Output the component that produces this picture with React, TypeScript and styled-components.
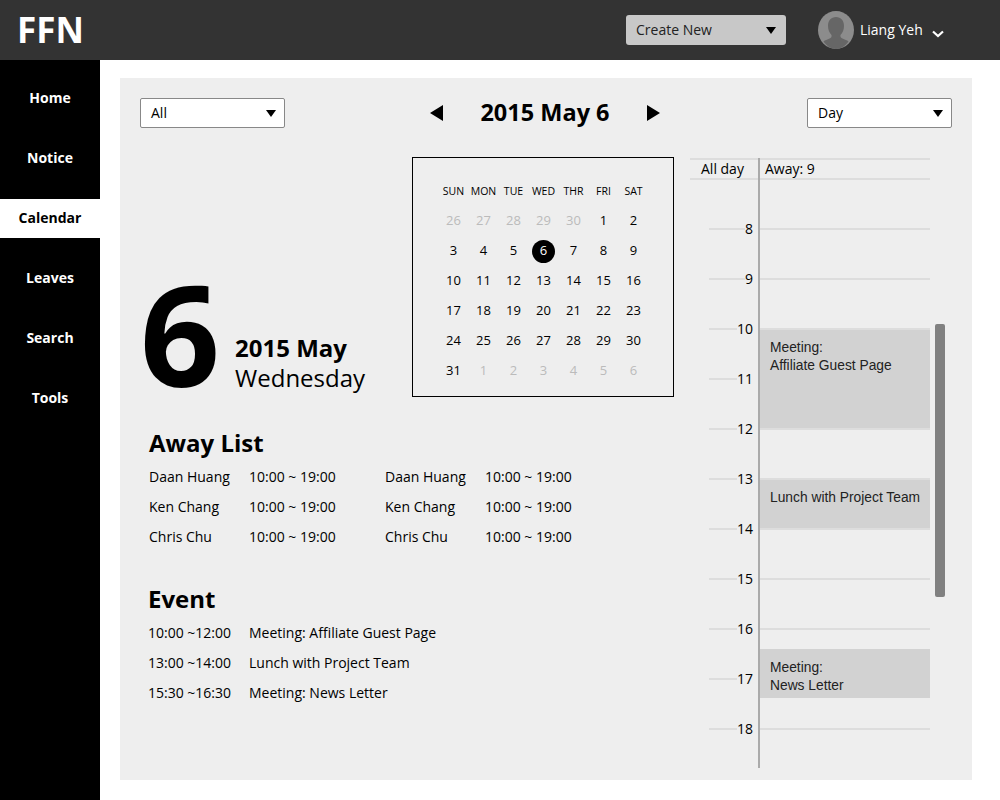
import React from "react";
import styled, { createGlobalStyle } from "styled-components";

const GlobalStyle = createGlobalStyle`
  html, body {
    margin: 0;
    padding: 0;
    background: #fff;
    font-family: "Open Sans", sans-serif;
    color: #000;
  }
`;

const Page = styled.div`
  width: 1000px;
  height: 800px;
  display: flex;
  flex-direction: column;
  overflow: hidden;
`;

const Header = styled.header`
  height: 60px;
  flex: none;
  background: #333;
  display: flex;
  align-items: center;
  padding-left: 17px;
`;

const Logo = styled.div`
  font-size: 35px;
  font-weight: 700;
  line-height: 60px;
  color: #fff;
`;

const CreateNew = styled.div`
  margin-left: auto;
  width: 160px;
  height: 30px;
  box-sizing: border-box;
  padding: 0 10px 2px;
  background: #c8c8c8;
  border-radius: 3px;
  display: flex;
  align-items: center;
  justify-content: space-between;
  font-size: 14px;
  color: #222;
`;

const Caret = styled.span`
  width: 0;
  height: 0;
  margin-top: 2px;
  border-left: 5px solid transparent;
  border-right: 5px solid transparent;
  border-top: 7px solid #000;
`;

const User = styled.div`
  display: flex;
  align-items: center;
  margin-left: 32px;
  width: 182px;
  color: #fff;
  font-size: 14px;
`;

const UserName = styled.span`
  margin: 0 0 2px 6px;
`;

const Chevron = styled.svg`
  margin: 8px 0 0 9px;
`;

const Body = styled.div`
  flex: 1;
  display: flex;
`;

const Sidebar = styled.nav`
  width: 100px;
  flex: none;
  background: #000;
  display: flex;
  flex-direction: column;
  gap: 20px;
  padding-top: 18px;
  box-sizing: border-box;
`;

const NavItem = styled.div<{ $active?: boolean }>`
  height: 40px;
  box-sizing: border-box;
  padding-bottom: 3px;
  border-top: 1px solid #000;
  display: flex;
  align-items: center;
  justify-content: center;
  font-size: 14px;
  font-weight: 700;
  background: ${(p) => (p.$active ? "#fff" : "#000")};
  color: ${(p) => (p.$active ? "#000" : "#fff")};
`;

const Panel = styled.main`
  width: 852px;
  height: 702px;
  margin: 18px 0 0 20px;
  padding: 20px;
  box-sizing: border-box;
  background: #eee;
`;

const Toolbar = styled.div`
  height: 30px;
  display: flex;
  align-items: center;
  justify-content: space-between;
`;

const SelectBox = styled.div`
  width: 145px;
  height: 30px;
  box-sizing: border-box;
  padding: 0 8px 2px 10px;
  background: #fff;
  border: 1px solid #888;
  border-radius: 2px;
  display: flex;
  align-items: center;
  justify-content: space-between;
  font-size: 14px;
`;

const DateNav = styled.div`
  display: flex;
  align-items: center;
  gap: 37px;
  margin-left: -2px;
`;

const NavArrow = styled.span<{ $right?: boolean }>`
  width: 0;
  height: 0;
  border-top: 8px solid transparent;
  border-bottom: 8px solid transparent;
  border-left: ${(p) => (p.$right ? "13px solid #000" : "none")};
  border-right: ${(p) => (p.$right ? "none" : "13px solid #000")};
`;

const DateTitle = styled.div`
  font-size: 23.5px;
  font-weight: 700;
  line-height: 30px;
  padding-bottom: 3px;
`;

const Columns = styled.div`
  display: flex;
  gap: 16px;
  margin-top: 29px;
`;

const LeftColumn = styled.div`
  width: 534px;
`;

const TopRow = styled.div`
  display: flex;
  justify-content: space-between;
  align-items: flex-end;
`;

const Hero = styled.div`
  display: flex;
  align-items: flex-end;
  gap: 15px;
  padding-left: 0;
`;

const BigDay = styled.div`
  font-size: 140px;
  font-weight: 700;
  line-height: 128px;
`;

const HeroText = styled.div`
  font-size: 24px;
  line-height: 30px;
  padding-bottom: 4px;
`;

const HeroMonth = styled.div`
  font-weight: 700;
`;

const CalendarBox = styled.div`
  width: 262px;
  height: 240px;
  box-sizing: border-box;
  border: 1px solid #000;
  padding: 18px 24.5px 0 25.5px;
`;

const CalendarGrid = styled.div`
  display: grid;
  grid-template-columns: repeat(7, 30px);
  grid-auto-rows: 30px;
`;

const WeekDay = styled.div`
  display: flex;
  align-items: center;
  justify-content: center;
  font-size: 10.5px;
`;

const DayCell = styled.div<{ $muted?: boolean; $selected?: boolean }>`
  display: flex;
  align-items: center;
  justify-content: center;
  font-size: 13px;
  color: ${(p) => (p.$muted ? "#bbb" : "#000")};

  span {
    width: 23px;
    height: 23px;
    box-sizing: border-box;
    padding-bottom: 2px;
    border-radius: 50%;
    display: flex;
    align-items: center;
    justify-content: center;
    background: ${(p) => (p.$selected ? "#000" : "transparent")};
    color: ${(p) => (p.$selected ? "#fff" : "inherit")};
  }
`;

const Section = styled.section<{ $top: number; $left: number }>`
  margin-top: ${(p) => p.$top}px;
  padding-left: ${(p) => p.$left}px;
`;

const SectionTitle = styled.h2`
  margin: 0 0 2px;
  font-size: 24px;
  font-weight: 700;
  line-height: 32px;
`;

const AwayGrid = styled.div`
  display: grid;
  grid-template-columns: 100px 136px 100px 100px;
  grid-auto-rows: 30px;
  align-items: center;
  font-size: 14px;
  white-space: nowrap;
`;

const EventGrid = styled.div`
  display: grid;
  grid-template-columns: 101px 1fr;
  grid-auto-rows: 30px;
  align-items: center;
  font-size: 14px;
  white-space: nowrap;
`;

const Timeline = styled.div`
  position: relative;
  width: 240px;
  height: 610px;
  margin-top: 1px;
  font-size: 14px;

  &::after {
    content: "";
    position: absolute;
    left: 68px;
    top: 0;
    bottom: 0;
    width: 2px;
    background: #aaa;
  }
`;

const AllDayRow = styled.div`
  height: 22px;
  box-sizing: border-box;
  border-top: 2px solid #ddd;
  border-bottom: 2px solid #ddd;
  display: grid;
  grid-template-columns: 68px 1fr;
  align-items: center;
  line-height: 18px;
`;

const AllDayLabel = styled.div`
  padding-left: 11px;
`;

const AwayCount = styled.div`
  padding-left: 7px;
`;

const Hours = styled.div`
  padding-top: 24px;
`;

const HourRow = styled.div`
  height: 50px;
  display: flex;
  align-items: center;
  padding-left: 19px;
`;

const HourTick = styled.div`
  flex: 1;
  height: 2px;
  background: #ddd;
`;

const HourLabel = styled.div`
  padding-right: 5px;
  line-height: 20px;
`;

const LaneLine = styled.div`
  width: 172px;
  height: 2px;
  background: #ddd;
`;

const EventBlock = styled.div<{ $ruled?: boolean }>`
  position: absolute;
  left: 70px;
  right: 0;
  z-index: 1;
  box-sizing: border-box;
  padding: ${(p) => (p.$ruled ? "9px" : "10px")} 0 0 10px;
  border-top: ${(p) => (p.$ruled ? "2px solid #ddd" : "none")};
  border-bottom: ${(p) => (p.$ruled ? "2px solid #ddd" : "none")};
  background: #d2d2d2;
  font-family: "Liberation Sans", Arial, sans-serif;
  font-size: 13.8px;
  line-height: 18px;
  color: #222;
`;

const Scrollbar = styled.div`
  position: absolute;
  left: 245px;
  top: 166px;
  width: 10px;
  height: 273px;
  border-radius: 2px;
  background: #808080;
`;

const navItems = ["Home", "Notice", "Calendar", "Leaves", "Search", "Tools"];
const weekDays = ["SUN", "MON", "TUE", "WED", "THR", "FRI", "SAT"];
const before = [26, 27, 28, 29, 30];
const after = [1, 2, 3, 4, 5, 6];
const monthDays = Array.from({ length: 31 }, (_, i) => i + 1);
const away = [
  ["Daan Huang", "10:00 ~ 19:00"],
  ["Ken Chang", "10:00 ~ 19:00"],
  ["Chris Chu", "10:00 ~ 19:00"],
];
const events = [
  ["10:00 ~12:00", "Meeting: Affiliate Guest Page"],
  ["13:00 ~14:00", "Lunch with Project Team"],
  ["15:30 ~16:30", "Meeting: News Letter"],
];
const hours = [8, 9, 10, 11, 12, 13, 14, 15, 16, 17, 18];
const blocks = [
  { top: 170, height: 102, ruled: true, lines: ["Meeting:", "Affiliate Guest Page"] },
  { top: 320, height: 52, ruled: true, lines: ["Lunch with Project Team"] },
  { top: 491, height: 49, ruled: false, lines: ["Meeting:", "News Letter"] },
];

const App = () => {
  return (
    <Page>
      <GlobalStyle />
      <Header>
        <Logo>FFN</Logo>
        <CreateNew>
          Create New
          <Caret />
        </CreateNew>
        <User>
          <svg width="36" height="38" viewBox="0 0 36 38">
            <ellipse cx="18" cy="19" rx="18" ry="19" fill="#8c8c8c" />
            <path
              d="M18 6c-5 0-8 3.500-8 9 0 4 1.500 7 3.500 9 .5 2-.5 3-3 4-2.500 1-4 1.500-5 2.500C8.500 35 13 38 18 38s9.500-3 12.500-7.500c-1-1-2.500-1.500-5-2.500-2.500-1-3.500-2-3-4 2-2 3.500-5 3.500-9 0-5.500-3-9-8-9z"
              fill="#666"
            />
          </svg>
          <UserName>Liang Yeh</UserName>
          <Chevron width="12" height="8" viewBox="0 0 12 8">
            <path d="M1 1.500l5 4.500 5-4.500" fill="none" stroke="#fff" strokeWidth="2.200" />
          </Chevron>
        </User>
      </Header>
      <Body>
        <Sidebar>
          {navItems.map((item) => (
            <NavItem key={item} $active={item === "Calendar"}>
              {item}
            </NavItem>
          ))}
        </Sidebar>
        <Panel>
          <Toolbar>
            <SelectBox>
              All
              <Caret />
            </SelectBox>
            <DateNav>
              <NavArrow />
              <DateTitle>2015 May 6</DateTitle>
              <NavArrow $right />
            </DateNav>
            <SelectBox>
              Day
              <Caret />
            </SelectBox>
          </Toolbar>
          <Columns>
            <LeftColumn>
              <TopRow>
                <Hero>
                  <BigDay>6</BigDay>
                  <HeroText>
                    <HeroMonth>2015 May</HeroMonth>
                    Wednesday
                  </HeroText>
                </Hero>
                <CalendarBox>
                  <CalendarGrid>
                    {weekDays.map((d) => (
                      <WeekDay key={d}>{d}</WeekDay>
                    ))}
                    {before.map((d) => (
                      <DayCell key={`b${d}`} $muted>
                        <span>{d}</span>
                      </DayCell>
                    ))}
                    {monthDays.map((d) => (
                      <DayCell key={d} $selected={d === 6}>
                        <span>{d}</span>
                      </DayCell>
                    ))}
                    {after.map((d) => (
                      <DayCell key={`a${d}`} $muted>
                        <span>{d}</span>
                      </DayCell>
                    ))}
                  </CalendarGrid>
                </CalendarBox>
              </TopRow>
              <Section $top={30} $left={9}>
                <SectionTitle>Away List</SectionTitle>
                <AwayGrid>
                  {away.map(([name, time]) => (
                    <React.Fragment key={name}>
                      <div>{name}</div>
                      <div>{time}</div>
                      <div>{name}</div>
                      <div>{time}</div>
                    </React.Fragment>
                  ))}
                </AwayGrid>
              </Section>
              <Section $top={32} $left={8}>
                <SectionTitle>Event</SectionTitle>
                <EventGrid>
                  {events.map(([time, title]) => (
                    <React.Fragment key={time}>
                      <div>{time}</div>
                      <div>{title}</div>
                    </React.Fragment>
                  ))}
                </EventGrid>
              </Section>
            </LeftColumn>
            <Timeline>
              <AllDayRow>
                <AllDayLabel>All day</AllDayLabel>
                <AwayCount>Away: 9</AwayCount>
              </AllDayRow>
              <Hours>
                {hours.map((h) => (
                  <HourRow key={h}>
                    <HourTick />
                    <HourLabel>{h}</HourLabel>
                    <LaneLine />
                  </HourRow>
                ))}
              </Hours>
              {blocks.map((b) => (
                <EventBlock key={b.top} $ruled={b.ruled} style={{ top: b.top, height: b.height }}>
                  {b.lines.map((line) => (
                    <div key={line}>{line}</div>
                  ))}
                </EventBlock>
              ))}
              <Scrollbar />
            </Timeline>
          </Columns>
        </Panel>
      </Body>
    </Page>
  );
};

export default App;
